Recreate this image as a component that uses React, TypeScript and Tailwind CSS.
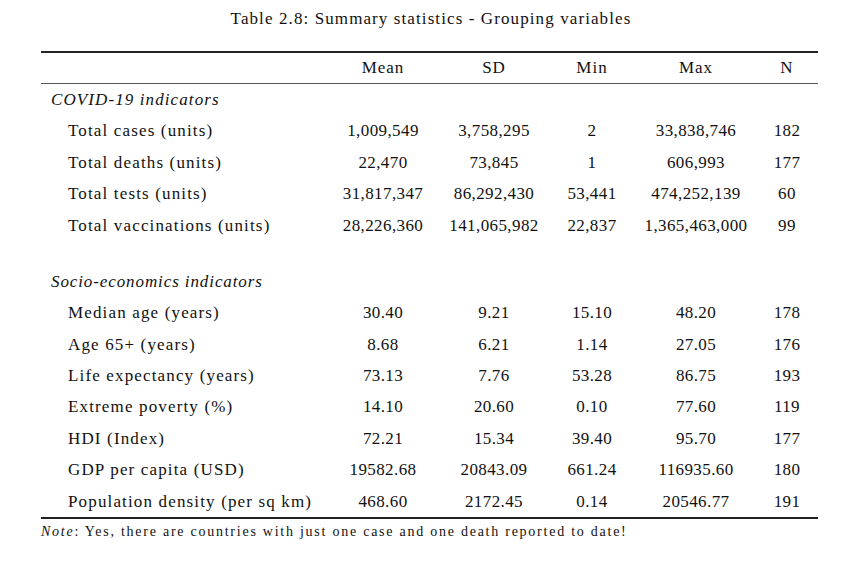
const covid = [
  ['Total cases (units)', '1,009,549', '3,758,295', '2', '33,838,746', '182'],
  ['Total deaths (units)', '22,470', '73,845', '1', '606,993', '177'],
  ['Total tests (units)', '31,817,347', '86,292,430', '53,441', '474,252,139', '60'],
  ['Total vaccinations (units)', '28,226,360', '141,065,982', '22,837', '1,365,463,000', '99'],
]

const socio = [
  ['Median age (years)', '30.40', '9.21', '15.10', '48.20', '178'],
  ['Age 65+ (years)', '8.68', '6.21', '1.14', '27.05', '176'],
  ['Life expectancy (years)', '73.13', '7.76', '53.28', '86.75', '193'],
  ['Extreme poverty (%)', '14.10', '20.60', '0.10', '77.60', '119'],
  ['HDI (Index)', '72.21', '15.34', '39.40', '95.70', '177'],
  ['GDP per capita (USD)', '19582.68', '20843.09', '661.24', '116935.60', '180'],
  ['Population density (per sq km)', '468.60', '2172.45', '0.14', '20546.77', '191'],
]

const cols = 'grid grid-cols-[285px_114px_108px_88px_120px_62px] items-center'

function Row({ cells }: { cells: string[] }) {
  return (
    <div className={`${cols} h-[31.4px]`}>
      <div className="pl-[27px] whitespace-nowrap tracking-[1.15px]">{cells[0]}</div>
      {cells.slice(1).map((c, i) => (
        <div key={i} className="text-center whitespace-nowrap tracking-[0.4px]">
          {c}
        </div>
      ))}
    </div>
  )
}

export default function App() {
  return (
    <div className="w-[862px] h-[565px] bg-white text-[#111] font-['Liberation_Serif',serif] text-[17px]">
      <div className="pt-[6px] h-[51px] text-center tracking-[1.1px]">
        Table 2.8: Summary statistics - Grouping variables
      </div>

      <div className="ml-[41px] w-[777px]">
        {/* top rule */}
        <div className="h-[2px] bg-[#222]"></div>
        <div className={`${cols} h-[30px] tracking-[1px]`}>
          <div></div>
          <div className="text-center">Mean</div>
          <div className="text-center">SD</div>
          <div className="text-center">Min</div>
          <div className="text-center">Max</div>
          <div className="text-center">N</div>
        </div>
        <div className="h-px bg-[#555]"></div>

        <div className="h-[31.4px] flex items-center pl-[10px] italic tracking-[1.1px]">COVID-19 indicators</div>
        {covid.map((r) => (
          <Row key={r[0]} cells={r} />
        ))}

        <div className="h-[25px]"></div>

        <div className="h-[31.4px] flex items-center pl-[10px] italic tracking-[0.9px]">Socio-economics indicators</div>
        {socio.map((r) => (
          <Row key={r[0]} cells={r} />
        ))}

        <div className="h-[2px] bg-[#222]"></div>
        <div className="pt-[2px] text-[14px] tracking-[1.75px]">
          <span className="italic">Note</span>: Yes, there are countries with just one case and one death reported to date!
        </div>
      </div>
    </div>
  )
}
